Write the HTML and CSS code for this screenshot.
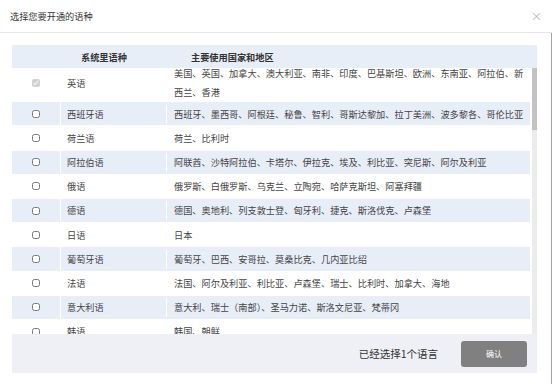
FILE: index.html
```html
<!DOCTYPE html>
<html lang="zh-CN">
<head>
  <meta charset="UTF-8" />
  <title>选择语种</title>
  <link rel="stylesheet" href="styles.css">
</head>
<body>

<div class="dialog">
  <div class="dialog-head">
    <span class="title">选择您要开通的语种</span>
    <span class="close">×</span>
  </div>

  <div class="dialog-body">
    <div class="grid-head">
      <div></div>
      <div class="h-lang">系统里语种</div>
      <div class="h-area">主要使用国家和地区</div>
    </div>

    <div class="list">
      <div class="viewport" id="langList">
        <div class="rows" id="rows"></div>
      </div>
      <div class="scrollbar"><div class="thumb"></div></div>
    </div>

    <div class="footer">
      <span class="picked">已经选择1个语言</span>
      <button class="btn-ok">确认</button>
    </div>
  </div>
</div>

<script>
  // 语种列表：[名称, 国家和地区]
  const langs = [
    ["英语", "美国、英国、加拿大、澳大利亚、南非、印度、巴基斯坦、欧洲、东南亚、阿拉伯、新西兰、香港"],
    ["西班牙语", "西班牙、墨西哥、阿根廷、秘鲁、智利、哥斯达黎加、拉丁美洲、波多黎各、哥伦比亚"],
    ["荷兰语", "荷兰、比利时"],
    ["阿拉伯语", "阿联酋、沙特阿拉伯、卡塔尔、伊拉克、埃及、利比亚、突尼斯、阿尔及利亚"],
    ["俄语", "俄罗斯、白俄罗斯、乌克兰、立陶宛、哈萨克斯坦、阿塞拜疆"],
    ["德语", "德国、奥地利、列支敦士登、匈牙利、捷克、斯洛伐克、卢森堡"],
    ["日语", "日本"],
    ["葡萄牙语", "葡萄牙、巴西、安哥拉、莫桑比克、几内亚比绍"],
    ["法语", "法国、阿尔及利亚、利比亚、卢森堡、瑞士、比利时、加拿大、海地"],
    ["意大利语", "意大利、瑞士（南部）、圣马力诺、斯洛文尼亚、梵蒂冈"],
    ["韩语", "韩国、朝鲜"],
    ["泰语", "泰国"]
  ];

  const rows = document.getElementById("rows");
  langs.forEach((l, i) => {
    const row = document.createElement("div");
    row.className = "row";
    const box = i === 0
      ? '<input type="checkbox" checked disabled>'
      : '<input type="checkbox">';
    row.innerHTML = `<div class="c-check">${box}</div><div class="c-lang">${l[0]}</div><div class="c-area">${l[1]}</div>`;
    rows.appendChild(row);
  });

  document.getElementById("langList").scrollTop = 4;
</script>

</body>
</html>
```

FILE: styles.css
```css
* {
  box-sizing: border-box;
}
body {
  margin: 0;
  background: #fff;
  font-family: "Noto Sans CJK SC", "Noto Sans", sans-serif;
  color: #444;
}
.dialog {
  width: 552px;
  height: 384px;
  overflow: hidden;
}
.dialog-head {
  height: 33px;
  border-bottom: 1px solid #e6e6e6;
  display: flex;
  align-items: center;
  justify-content: space-between;
  padding: 0 10px 0 10px;
}
.title {
  font-size: 9.2px;
  color: #333;
}
.close {
  font-size: 11px;
  color: #b5b5b5;
}
.dialog-body {
  height: 351px;
  padding: 12px 14px 0 12px;
  border-right: 1px solid #a4a4a4;
}
.grid-head,
.row {
  display: grid;
  grid-template-columns: 48px 106px 1fr;
}
.grid-head {
  height: 23.3px;
  background: #e8eef8;
  align-items: center;
  font-size: 9.2px;
  font-weight: bold;
  color: #333;
}
.h-lang {
  padding-left: 21px;
}
.h-area {
  padding-left: 25px;
}
.list {
  height: 265.7px;
  display: flex;
}
.viewport {
  flex: 1;
  overflow: hidden;
  margin-right: 2px;
}
.scrollbar {
  width: 5px;
  background: #ececec;
}
.thumb {
  height: 62px;
  background: #c3c3c3;
}
.row {
  min-height: 24.2px;
  border-bottom: 1px solid #fff;
  font-size: 9.2px;
  line-height: 18.5px;
}
.row:nth-child(even) {
  background: #e8eef8;
}
.c-check,
.c-lang {
  display: flex;
  align-items: center;
}
.c-check {
  justify-content: center;
}
.c-lang {
  border-left: 1px solid #fff;
  padding-left: 6px;
}
.c-area {
  border-left: 1px solid #fff;
  padding: 0 0 0 7px;
  align-self: center;
}
input[type="checkbox"] {
  width: 8px;
  height: 8px;
  margin: 0;
}
.footer {
  height: 39.3px;
  background: #eef0f5;
  display: flex;
  align-items: center;
  justify-content: flex-end;
  padding-right: 10px;
}
.picked {
  font-size: 10.5px;
  color: #333;
  margin-right: 23px;
}
.btn-ok {
  width: 66px;
  height: 26px;
  border: none;
  border-radius: 3px;
  background: #808080;
  color: #fff;
  font-family: inherit;
  font-size: 8px;
  padding: 0;
}
```
